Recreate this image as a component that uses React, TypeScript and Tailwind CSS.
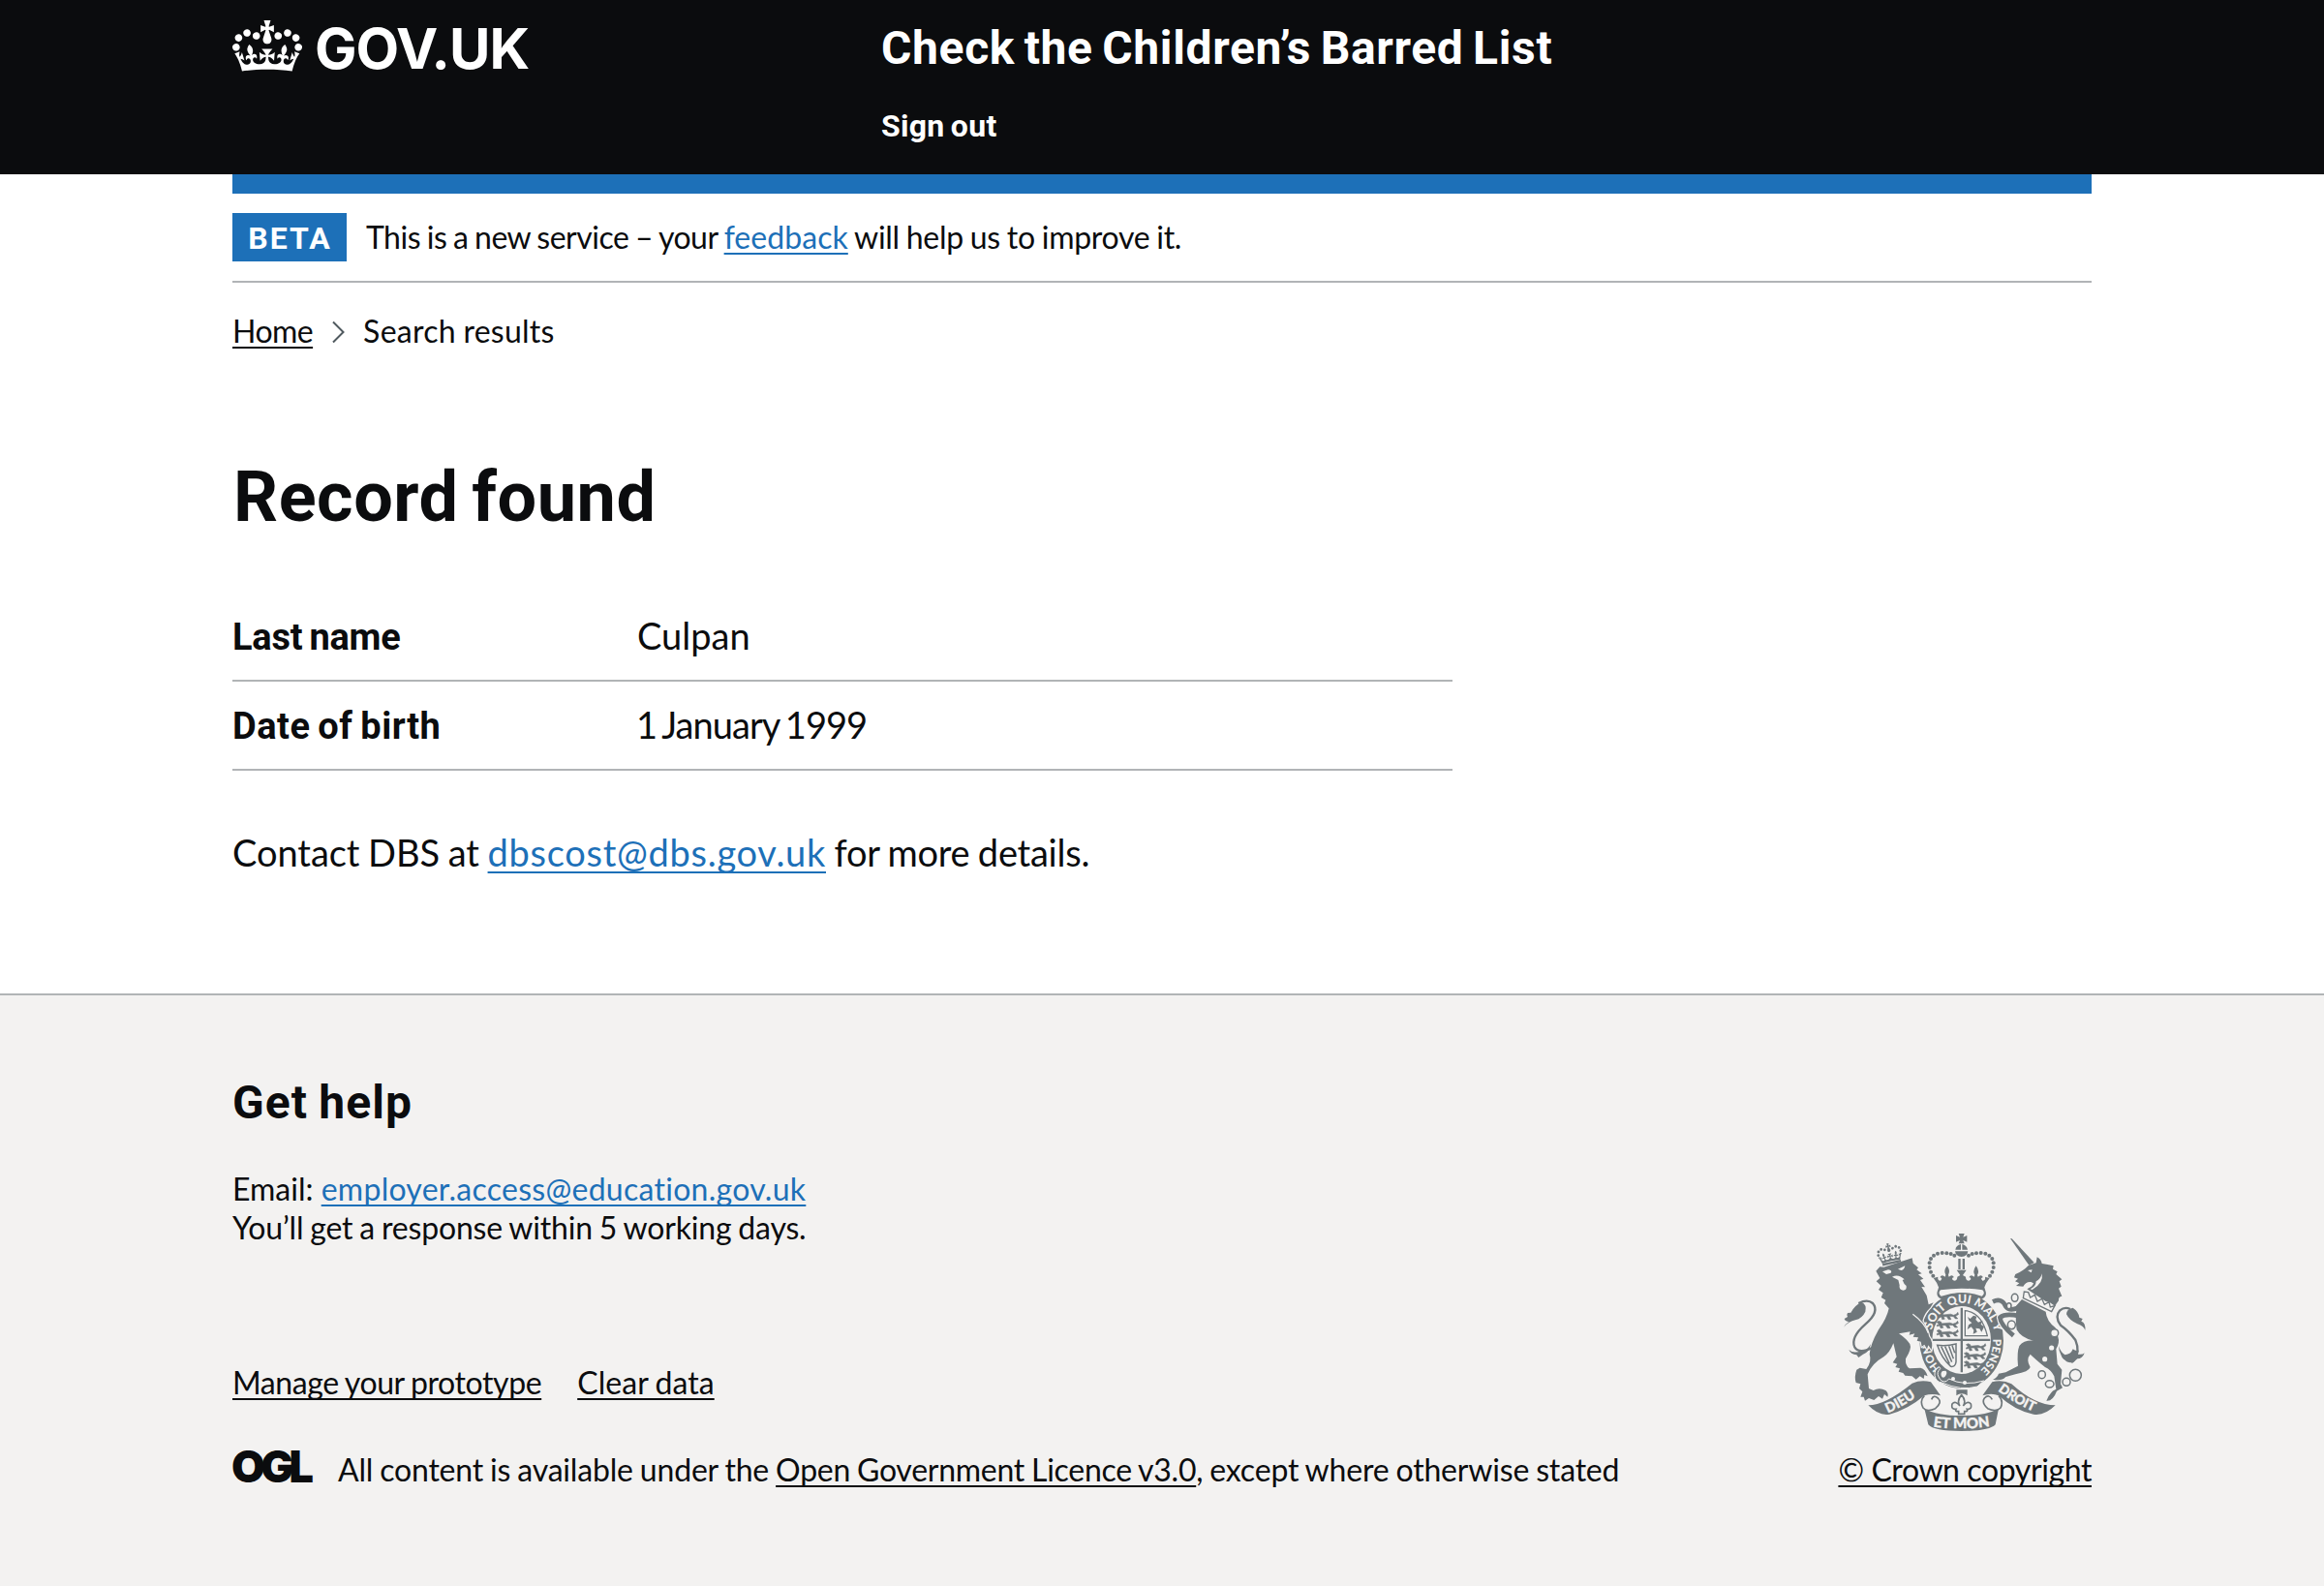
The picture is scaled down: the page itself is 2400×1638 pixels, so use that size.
import type { ReactNode } from "react";

const CROWN_PATH =
  "M25 30.2c3.5 1.5 7.7-.2 9.1-3.7 1.5-3.6-.2-7.8-3.9-9.2-3.6-1.4-7.6.3-9.1 3.9-1.4 3.5.3 7.5 3.9 9zM9 39.5c3.6 1.5 7.8-.2 9.2-3.7 1.5-3.6-.2-7.8-3.9-9.1-3.6-1.5-7.6.2-9.1 3.8-1.4 3.5.3 7.5 3.8 9zM4.4 57.2c3.5 1.5 7.7-.2 9.1-3.8 1.5-3.6-.2-7.7-3.9-9.1-3.5-1.5-7.6.3-9.1 3.8-1.4 3.5.3 7.6 3.9 9.1zm38.3-21.4c3.5 1.5 7.7-.2 9.1-3.8 1.5-3.6-.2-7.7-3.9-9.1-3.6-1.5-7.6.3-9.1 3.8-1.3 3.6.4 7.7 3.9 9.1zm64.4-5.6c-3.6 1.5-7.8-.2-9.1-3.7-1.5-3.6.2-7.8 3.8-9.2 3.6-1.4 7.7.3 9.2 3.9 1.3 3.5-.4 7.5-3.9 9zm15.9 9.3c-3.6 1.5-7.7-.2-9.1-3.7-1.5-3.6.2-7.8 3.7-9.1 3.6-1.5 7.7.2 9.2 3.8 1.5 3.5-.3 7.5-3.8 9zm4.7 17.7c-3.6 1.5-7.8-.2-9.2-3.8-1.5-3.6.2-7.7 3.9-9.1 3.6-1.5 7.7.3 9.2 3.8 1.3 3.5-.4 7.6-3.9 9.1zM89.3 35.8c-3.6 1.5-7.8-.2-9.2-3.8-1.4-3.6.2-7.7 3.9-9.1 3.6-1.5 7.7.3 9.2 3.8 1.4 3.6-.3 7.7-3.9 9.1zM69.7 17.7l8.9 4.7V9.3l-8.9 2.8c-.2-.3-.5-.6-.9-.9L72.4 0H59.6l3.5 11.2c-.3.3-.6.5-.9.9l-8.8-2.8v13.1l8.8-4.7c.3.3.6.7.9.9l-5 15.4v.1c-.2.8-.4 1.6-.4 2.4 0 4.1 3.1 7.5 7 8.1h.2c.3 0 .7.1 1 .1.4 0 .7 0 1-.1h.2c4-.6 7.1-4.1 7.1-8.1 0-.8-.1-1.7-.4-2.4V34l-5.1-15.4c.4-.2.7-.6 1-.9zM66 92.8c16.9 0 32.8 1.1 47.1 3.2 4-16.9 8.9-26.7 14-33.5l-9.6-3.4c1 4.9 1.1 7.2 0 10.2-1.5-1.4-3-4.3-4.2-8.7L108.6 76c2.8-2 5-3.2 7.5-3.3-4.4 9.4-10 11.9-13.6 11.2-4.3-.8-6.3-4.6-5.6-7.9 1-4.7 5.7-5.9 8-.5 4.3-8.7-3-11.4-7.6-8.8 7.1-7.2 7.9-13.5 2.1-21.1-8 6.1-8.1 12.3-4.5 20.8-4.7-5.4-12.1-2.5-9.5 6.2 3.4-5.2 7.9-2 7.2 3.1-.6 4.3-6.4 7.8-13.5 7.2-10.3-.9-10.9-8-11.2-13.8 2.5-.5 7.1 1.8 11 7.3L80.2 60c-4.1 4.4-8 5.3-12.3 5.4 1.4-4.4 8-11.6 8-11.6H55.5s6.4 7.2 7.9 11.6c-4.2-.1-8-1-12.3-5.4l1.4 16.4c3.9-5.5 8.5-7.7 10.9-7.3-.3 5.8-.9 12.8-11.1 13.8-7.2.6-12.9-2.9-13.5-7.2-.7-5 3.8-8.3 7.1-3.1 2.7-8.7-4.6-11.6-9.4-6.2 3.7-8.5 3.6-14.7-4.6-20.8-5.8 7.6-5 13.9 2.2 21.1-4.7-2.6-11.9.1-7.7 8.8 2.3-5.5 7.1-4.2 8.1.5.7 3.3-1.3 7.1-5.7 7.9-3.5.7-9-1.8-13.5-11.2 2.5.1 4.7 1.3 7.5 3.3l-4.7-15.4c-1.2 4.4-2.7 7.2-4.3 8.7-1.1-3-.9-5.3 0-10.2l-9.5 3.4c5 6.9 9.9 16.7 14 33.5 14.8-2.1 30.8-3.2 47.7-3.2z";

function Link({ className = "", children }: { className?: string; children: ReactNode }) {
  return (
    <a
      href="#"
      className={`underline decoration-2 [text-decoration-skip-ink:none] ${className}`}
    >
      {children}
    </a>
  );
}

/* Pearls along the arches of the royal crown, left half; the right half is mirrored. */
const PEARLS = [
  [415, 110], [404, 105], [391, 103], [377, 102], [363, 104], [351, 110],
  [342, 120], [338, 133], [338, 147], [342, 161], [349, 173],
];

const LION_PASSANT =
  "M0 3 L6 0 L12 3 L13 7 L34 5 L42 8 L50 5 L54 0 L56 6 L48 11 L54 18 L47 18 L42 12 L31 11 L35 20 L28 20 L23 12 L14 12 L17 19 L10 20 L8 13 L1 15 L0 12 L6 9 Z";

function Quarter({ x, y }: { x: number; y: number }) {
  return (
    <g transform={`translate(${x} ${y})`} stroke="#6f777b" strokeWidth="1.5">
      <path d={LION_PASSANT} transform="translate(6 -4) scale(1.1)" />
      <path d={LION_PASSANT} transform="translate(0 23) scale(1.2 1.1)" />
      <path d={LION_PASSANT} transform="translate(0 50) scale(1.2 1.1)" />
    </g>
  );
}

function CrownHalf() {
  return (
    <g>
      {PEARLS.map(([x, y]) => (
        <circle key={`${x}-${y}`} cx={x} cy={y} r="6" />
      ))}
      <path d="M350 180 L364 176 Q362 188 372 188 L376 182 Q374 176 370 178 Q376 166 386 176 L388 170 Q380 158 392 142 Q404 158 396 170 L398 176 Q408 166 414 178 Q408 176 408 184 L414 188 Q424 188 424 176 L433 171 L422 155 H440 V211 Q400 207 368 213 Q362 194 350 180 Z" />
    </g>
  );
}

function RoyalArms() {
  return (
    <svg viewBox="72 42 750 612" className="h-[204px] w-[250px] overflow-visible" fill="#6f777b" aria-hidden="true">
      <defs>
        <path id="garter-full" d="M345 341 A102 118 0 0 1 437 257 A102 118 0 0 1 540 350" />
        <path id="garter-right" d="M534 368 A98 112 0 0 1 486 472" />
        <path id="garter-left" d="M372 459 A98 112 0 0 1 340 380" />
        <path id="ribbon-left" d="M209 598 Q262 576 322 530" />
        <path id="ribbon-right" d="M549 529 Q600 568 668 597" />
        <path id="ribbon-mid" d="M349 640 Q437 654 532 638" />
      </defs>

      {/* crown above the shield */}
      <path d="M428 42 h18 l-4 11 l12 -5 v20 l-12 -5 l4 10 h-18 l4 -10 l-12 5 v-20 l12 5 z" />
      <path d="M418 92 q2 -14 17 -17 v17 z M439 75 q14 3 17 17 h-17 z M417 97 h40 q-2 16 -20 17 q-18 -1 -20 -17 z" />
      <path d="M427 120 h7 v33 h-7 z M440 120 h7 v33 h-7 z" />
      <CrownHalf />
      <g transform="translate(874 0) scale(-1 1)">
        <CrownHalf />
      </g>
      <path d="M366 209 Q437 197 508 209 L512 222 Q516 238 500 245 Q437 218 374 245 Q358 238 362 222 Z" />
      <path d="M372 217 Q437 207 502 217 Q512 226 500 236 Q437 214 374 236 Q362 226 372 217 Z" fill="#f3f2f1" />

      {/* garter and shield */}
      <ellipse cx="437" cy="374" rx="130" ry="148" />
      <ellipse cx="437" cy="372" rx="91" ry="105" fill="#f3f2f1" />
      <path d="M434 272 h7 v200 h-7 z M348 368 h178 v7 h-178 z" />
      <Quarter x={360} y={290} />
      <Quarter x={445} y={387} />
      <path d="M448 281 Q500 286 517 359 H448 Z" fill="none" stroke="#6f777b" strokeWidth="4" />
      <path d="M456 300 l8 6 l10 -10 l10 3 l-3 10 l8 8 l14 -6 l-6 12 l10 8 l-8 16 l-6 -10 l-12 -2 l4 12 l-12 6 l2 -12 l-8 -10 l-12 8 l4 -14 l10 -6 l-9 -8 z" />
      <path
        d="M362 388 Q390 392 420 384 L420 440 Q418 456 404 454 Q376 430 362 388 Z M374 392 L400 446 M386 392 L407 440 M398 391 L412 430 M408 389 L416 412"
        fill="none"
        stroke="#6f777b"
        strokeWidth="4.5"
      />
      <g fill="#f3f2f1" fontFamily="Lato, sans-serif" fontWeight="900" fontSize="37">
        <text>
          <textPath href="#garter-full">SOIT QUI MAL Y</textPath>
        </text>
        <text fontSize="35">
          <textPath href="#garter-right">PENSE</textPath>
        </text>
        <text fontSize="34">
          <textPath href="#garter-left">HON</textPath>
        </text>
      </g>
      <path
        d="M372 460 q-14 12 -6 26 q8 18 24 14 l8 -8 q48 24 108 6 l-20 18 q-50 14 -110 -12 q-18 -2 -22 -22 q-2 -18 14 -26 z"
        stroke="#f3f2f1"
        strokeWidth="3"
      />
      <path d="M378 468 q-8 8 -2 18 q6 6 12 -4 q6 -10 0 -15 z" fill="#f3f2f1" />
      <circle cx="411" cy="492" r="6" fill="#f3f2f1" />
      <circle cx="447" cy="504" r="6" fill="#f3f2f1" />
      <path d="M421 526 h34 v18 q-17 -12 -34 0 z" />
      <path
        d="M437 542 q-16 18 -5 34 q-14 -18 -24 -6 q-4 18 12 16 q-4 8 8 7 v8 h18 v-8 q12 1 8 -7 q16 2 12 -16 q-10 -12 -24 6 q11 -16 -5 -34 z"
        fill="none"
        stroke="#6f777b"
        strokeWidth="5"
      />

      {/* lion */}
      <path
        stroke="#f3f2f1"
        strokeWidth="7"
        paintOrder="stroke"
        d="M172 158 L184 145 L196 146 L284 118 L287 134 L303 148 L298 154 L314 166 L303 169 L319 182 L309 186 L324 208 L313 207 L329 234 L335 262 L350 256 L340 272 Q322 288 316 312 Q334 342 336 360 Q350 378 344 402 L334 388 L330 400 L322 386 L314 392 L311 377 L299 374 L303 364 L287 362 L292 352 L275 356 L278 346 L243 352 Q266 368 277 384 Q284 398 264 430 Q262 452 276 460 L310 458 Q326 462 332 484 L322 480 L320 492 L308 484 L296 494 L284 484 L262 482 L256 474 L242 470 L246 460 L232 456 L238 446 L224 442 L236 424 L226 382 Q214 412 196 424 Q160 444 146 478 L150 522 L164 528 Q182 518 202 528 Q212 536 208 548 L198 540 L192 554 L180 546 L166 558 L150 552 L138 560 L134 548 L124 548 L130 532 L120 522 L124 508 L110 504 Q104 486 112 464 L122 458 L142 462 Q160 438 152 416 Q154 386 180 340 Q206 304 212 274 L198 258 L202 248 L188 240 L194 226 L180 216 L188 204 L173 190 L184 180 Z"
      />
      <path
        d="M192 160 l12 8 l14 -4 q6 -8 -8 -10 z M240 152 l22 -10 q-2 12 -12 14 z M222 176 q20 -10 38 8 l-6 2 q4 12 12 18 q2 14 -10 14 q-14 -2 -11 -16 l-4 -16 z"
        fill="#f3f2f1"
      />
      <path d="M286 292 Q322 318 334 350" fill="none" stroke="#f3f2f1" strokeWidth="4" />
      <g transform="rotate(-12 214 106)">
        <g transform="translate(175 72) scale(0.6)">
          <path d={CROWN_PATH} />
        </g>
        <rect x="186" y="130" width="58" height="7" />
      </g>
      <path
        d="M160 396 Q120 416 106 394 Q92 364 140 322 Q184 284 162 258 Q146 244 118 258"
        fill="none"
        stroke="#6f777b"
        strokeWidth="7"
      />
      <path d="M72 332 Q78 322 88 315 Q76 314 74 306 L84 300 Q80 294 84 288 L94 287 Q108 262 128 255 Q144 262 139 284 Q130 304 108 310 Q88 314 72 332 Z" />
      <path d="M88 402 Q104 416 128 404 Q142 408 156 384 Q150 412 132 416 L118 426 L112 418 Q94 416 88 402 Z" />

      {/* unicorn */}
      <path d="M588 57 L593 58 L662 132 L646 140 Z" />
      <path d="M645 140 L668 133 L671 115 Q684 122 686 135 L704 138 L722 142 L720 152 L734 160 L730 168 L748 184 L740 190 L746 206 L738 212 L748 236 Q736 238 738 250 L726 266 Q712 254 698 252 L664 230 L640 214 Q658 206 660 196 L652 192 Q636 190 628 206 L606 204 L616 196 L603 190 L612 182 L600 178 L604 168 Q628 158 645 140 Z" />
      <path
        d="M642 156 l14 -2 l-3 9 z M686 166 Q692 196 656 216 L650 214 Q668 206 668 190 Q682 184 686 166 Z"
        fill="#f3f2f1"
      />
      <g fill="none" strokeLinejoin="round">
        <path d="M534 253 Q562 240 574 268 Q586 284 612 272 M616 298 Q574 288 556 302 Q558 326 598 358" stroke="#f3f2f1" strokeWidth="21" />
        <path d="M534 253 Q562 240 574 268 Q586 284 612 272 M616 298 Q574 288 556 302 Q558 326 598 358" stroke="#6f777b" strokeWidth="14" />
      </g>
      <path d="M624 246 L698 284 Q700 312 728 334 L736 362 Q742 380 730 400 L734 446 L748 464 L744 508 L750 520 L732 530 Q720 562 700 560 Q706 544 714 536 Q718 528 730 524 L724 484 Q714 464 696 456 Q664 430 650 416 Q636 432 650 456 Q646 470 604 478 L574 486 Q562 500 534 494 Q548 488 552 476 L574 472 L612 452 Q608 410 616 390 Q630 372 660 374 Q622 366 608 340 Q604 310 606 290 Q608 276 606 266 Z" />
      <path
        d="M631 222 L628 242 L716 284 L726 266 L712 270 L708 254 L694 262 L686 244 L672 252 L664 232 L650 240 L644 224 Z"
        fill="#f3f2f1"
        stroke="#6f777b"
        strokeWidth="4"
      />
      <path
        d="M752 420 Q764 444 784 436 Q806 410 790 372 Q770 344 744 326 Q724 300 742 280 Q756 268 774 276"
        fill="none"
        stroke="#6f777b"
        strokeWidth="7"
      />
      <path d="M820 342 Q816 328 796 322 Q770 310 762 292 Q762 276 782 272 Q800 284 802 302 L812 306 L808 314 Q822 318 820 342 Z" />
      <path d="M738 390 Q744 410 758 418 Q776 416 782 400 Q792 408 800 404 L796 416 Q812 418 818 412 Q812 430 796 430 L780 444 L770 436 Q750 436 746 420 Q738 406 738 390 Z" />

      {/* chain */}
      <g fill="#f3f2f1" stroke="#6f777b" strokeWidth="4.5">
        <ellipse cx="602" cy="241" rx="10" ry="12" />
        <ellipse cx="584" cy="266" rx="7" ry="9" />
        <ellipse cx="592" cy="325" rx="12" ry="13" />
        <ellipse cx="725" cy="350" rx="12" ry="12" />
        <ellipse cx="716" cy="396" rx="10" ry="10" />
        <ellipse cx="695" cy="431" rx="10" ry="10" />
        <ellipse cx="686" cy="479" rx="11" ry="12" />
        <ellipse cx="710" cy="508" rx="13" ry="11" />
        <ellipse cx="762" cy="502" rx="12" ry="12" />
        <circle cx="790" cy="481" r="18" />
      </g>

      {/* motto ribbon */}
      <path d="M148 574 Q200 574 284 506 Q312 494 342 502 L372 544 Q346 536 322 544 Q270 588 214 602 Q180 608 148 574 Z" />
      <path d="M728 574 Q664 574 592 508 Q564 494 532 502 L502 544 Q530 534 552 544 Q604 592 660 602 Q694 608 728 574 Z" />
      <path
        d="M322 544 Q306 560 318 582 Q330 596 356 584 Q378 566 364 552 Q350 540 344 556 M552 544 Q568 560 558 582 Q544 596 518 584 Q498 566 508 552 Q522 538 532 556"
        fill="none"
        stroke="#6f777b"
        strokeWidth="5"
      />
      <path d="M322 584 Q360 606 437 606 Q514 606 552 584 L542 634 Q524 654 437 654 Q350 654 334 634 Z" />
      <g fill="#f3f2f1" stroke="#f3f2f1" strokeWidth="1" fontFamily="Lato, sans-serif" fontWeight="900" fontSize="42">
        <text>
          <textPath href="#ribbon-left">DIEU</textPath>
        </text>
        <text fontSize="41">
          <textPath href="#ribbon-right">DROIT</textPath>
        </text>
        <text fontSize="45">
          <textPath href="#ribbon-mid">ET MON</textPath>
        </text>
      </g>
    </svg>
  );
}

function Header() {
  return (
    <header className="flex h-[180px] bg-[#0b0c0e] px-[240px] text-white">
      <div className="flex w-[670px] items-start pt-5">
        <svg viewBox="0 0 132 97" className="mt-px mr-[13px] h-[53px] w-[72px]" fill="currentColor" aria-hidden="true">
          <path d={CROWN_PATH} />
        </svg>
        <span className="font-[Inter] text-[58px] leading-[60px] font-bold tracking-[-1px]">GOV.UK</span>
      </div>
      <div className="flex flex-col items-start pt-5 font-[Roboto] font-bold">
        <span className="text-[48px] leading-[60px] tracking-[0.65px] [word-spacing:-3px]">
          Check the Children’s Barred List
        </span>
        <span className="mt-[30px] text-[32px] leading-10 tracking-[0.3px] [word-spacing:-2px]">Sign out</span>
      </div>
    </header>
  );
}

type RowProps = { label: string; value: string; labelClass: string; valueClass: string };

function SummaryRow({ label, value, labelClass, valueClass }: RowProps) {
  return (
    <div className="flex h-[92px] items-center border-b-2 border-[#b1b4b6] text-[38px] leading-[50px]">
      <dt className={`w-[418px] pt-0.5 font-[Roboto] font-bold ${labelClass}`}>{label}</dt>
      <dd className={`pb-[3px] ${valueClass}`}>{value}</dd>
    </div>
  );
}

export default function App() {
  return (
    <div className="flex h-[1638px] w-[2400px] flex-col bg-white font-[Lato] text-[32px] leading-10 whitespace-nowrap text-[#0b0c0e] underline-offset-[4px]">
      <Header />

      <main className="mx-[240px] flex h-[846px] flex-col">
        <div className="h-5 bg-[#1d70b8]" />
        <div className="flex h-[92px] items-center border-b-2 border-[#b1b4b6]">
          <strong className="flex h-[50px] w-[118px] items-center justify-center bg-[#1d70b8] pt-0.5 pl-px font-[Roboto] font-bold tracking-[2px] text-white">
            BETA
          </strong>
          <p className="pb-px pl-[20px] tracking-[-0.5px] [word-spacing:-1px]">
            This is a new service – your <Link className="tracking-[0.05px] text-[#1d70b8]">feedback</Link>
            <span className="tracking-[-0.28px]"> will help us to improve it.</span>
          </p>
        </div>

        <nav className="mt-[30px] flex items-center">
          <Link className="tracking-[-0.55px]">Home</Link>
          <svg viewBox="0 0 16 24" className="mt-0.5 mr-[17px] ml-[19px] h-6 w-4" fill="none" stroke="#505a5f" strokeWidth="2" aria-hidden="true">
            <path d="M2 1.5 L12.5 12 L2 22.5" />
          </svg>
          <span className="tracking-[0.27px] [word-spacing:-1px]">Search results</span>
        </nav>

        <h1 className="mt-[112px] ml-px font-[Roboto] text-[72px] leading-[80px] font-bold tracking-[0.55px] [word-spacing:-5px]">
          Record found
        </h1>

        <dl className="mt-[58px] w-[1260px]">
          <SummaryRow label="Last name" value="Culpan" labelClass="tracking-[-0.25px] [word-spacing:-2px]" valueClass="" />
          <SummaryRow
            label="Date of birth"
            value="1 January 1999"
            labelClass="tracking-[0.5px] [word-spacing:-2px]"
            valueClass="-ml-px tracking-[-0.95px] [word-spacing:-2.5px]"
          />
        </dl>

        <p className="mt-[59px] text-[38px] leading-[50px] tracking-[-0.05px] [word-spacing:-1px]">
          Contact DBS at{" "}
          <Link className="tracking-[0.72px] text-[#1d70b8] underline-offset-[5px]">dbscost@dbs.gov.uk</Link>
          <span className="tracking-[-0.25px]"> for more details.</span>
        </p>
      </main>

      <footer className="flex h-[612px] flex-col border-t-2 border-[#b1b4b6] bg-[#f3f2f1] px-[240px] pt-[81px]">
        <div className="flex h-[429px] items-end justify-between">
          <div className="flex flex-col">
            <h2 className="font-[Roboto] text-[48px] leading-[60px] font-bold tracking-[1.1px] [word-spacing:-2px]">
              Get help
            </h2>
            <p className="mt-[39px]">
              Email: <Link className="tracking-[0.27px] text-[#1d70b8]">employer.access@education.gov.uk</Link>
            </p>
            <p className="tracking-[-0.19px] [word-spacing:-1px]">You’ll get a response within 5 working days.</p>
            <div className="mt-[120px] flex gap-[37px] [word-spacing:-1px]">
              <Link className="tracking-[-0.4px]">Manage your prototype</Link>
              <Link className="tracking-[0.06px]">Clear data</Link>
            </div>
            <div className="mt-[50px] flex">
              <div className="w-[109px]">
                <span className="-mt-[3px] -ml-px block w-fit font-[Inter] text-[45px] leading-10 font-black tracking-[-4.7px]">
                  OGL
                </span>
              </div>
              <p className="tracking-[-0.18px] [word-spacing:-1px]">
                All content is available under the{" "}
                <Link className="tracking-[-0.26px]">Open Government Licence v3.0</Link>
                <span className="tracking-[-0.18px]">, except where otherwise stated</span>
              </p>
            </div>
          </div>
          <div className="flex flex-col items-center gap-[20px]">
            <RoyalArms />
            <Link className="tracking-[-0.4px]">© Crown copyright</Link>
          </div>
        </div>
      </footer>
    </div>
  );
}
